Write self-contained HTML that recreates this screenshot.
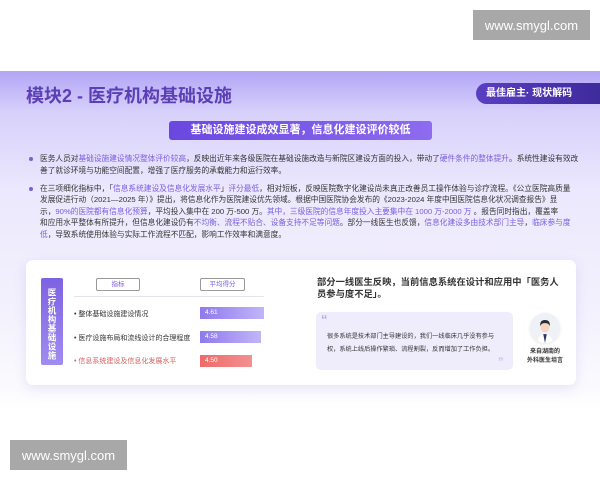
<!DOCTYPE html>
<html><head><meta charset="utf-8"><style>
*{margin:0;padding:0;box-sizing:border-box}
body{width:600px;height:480px;background:#fff;position:relative;overflow:hidden;font-family:"Liberation Sans","Noto Sans CJK SC",sans-serif}
.a{position:absolute}
.wm{background:#a8a8a8;color:#fff;font-size:13px;display:flex;align-items:center;justify-content:center}
.bg{left:0;top:71px;width:600px;height:340px;background:linear-gradient(180deg,#b2a5f6 0%,#d7d0fb 12%,#ece8fd 35%,#f3f1fd 70%,#fafafe 92%,#fff 100%)}
.t{font-size:7.7px;color:#333;white-space:nowrap}
.h{color:#7a5ee0}
</style></head><body>
<div class="a wm" style="left:473px;top:10px;width:117px;height:30px">www.smygl.com</div>
<div class="a wm" style="left:10px;top:440px;width:117px;height:30px">www.smygl.com</div>
<div class="a bg"></div>
<div class="a" style="left:26px;top:84px;font-size:18px;font-weight:bold;color:#5b3fb5;line-height:24px">模块2 - 医疗机构基础设施</div>
<div class="a" style="left:476px;top:83px;width:130px;height:21px;border-radius:11px 0 0 11px;background:linear-gradient(90deg,#5a3ec2,#3d2a9a);color:#fff;font-size:10px;font-weight:bold;line-height:21px;padding-left:10px">最佳雇主· 现状解码</div>
<div class="a" style="left:169px;top:121px;width:263px;height:19px;border-radius:3px;background:linear-gradient(90deg,#6a47e0,#8d6cf0);color:#fff;font-size:11px;font-weight:bold;line-height:19px;text-align:center">基础设施建设成效显著，信息化建设评价较低</div>
<div class="a" style="left:29px;top:157px;width:4px;height:4px;border-radius:50%;background:#7a5ee0"></div>
<div class="a t" style="left:40px;top:153px;line-height:12px">医务人员对<span class="h">基础设施建设情况整体评价较高</span>，反映出近年来各级医院在基础设施改造与新院区建设方面的投入，带动了<span class="h">硬件条件的整体提升</span>。系统性建设有效改<br>善了就诊环境与功能空间配置，增强了医疗服务的承载能力和运行效率。</div>
<div class="a" style="left:29px;top:187px;width:4px;height:4px;border-radius:50%;background:#7a5ee0"></div>
<div class="a t" style="left:40px;top:183px;line-height:11.4px">在三项细化指标中，「<span class="h">信息系统建设及信息化发展水平</span>」<span class="h">评分最低</span>，相对短板，反映医院数字化建设尚未真正改善员工操作体验与诊疗流程。《公立医院高质量<br>发展促进行动（2021—2025 年）》提出，将信息化作为医院建设优先领域。根据中国医院协会发布的《2023-2024 年度中国医院信息化状况调查报告》显<br>示，<span class="h">90%的医院都有信息化预算</span>，平均投入集中在 200 万-500 万。<span class="h">其中，三级医院的信息年度投入主要集中在 1000 万-2000 万</span> 。报告同时指出，覆盖率<br>和应用水平整体有所提升，但信息化建设仍有<span class="h">不均衡、流程不贴合、设备支持不足等问题</span>。部分一线医生也反馈，<span class="h">信息化建设多由技术部门主导</span>，<span class="h">临床参与度<br>低</span>，导致系统使用体验与实际工作流程不匹配，影响工作效率和满意度。</div>
<div class="a" style="left:26px;top:260px;width:550px;height:125px;background:#fff;border-radius:7px;box-shadow:0 4px 12px rgba(120,100,200,.15)"></div>
<div class="a" style="left:41px;top:278px;width:22px;height:87px;background:linear-gradient(180deg,#7d62e2,#a18cf0);border-radius:2px;color:#fff;font-size:8.5px;font-weight:bold;writing-mode:vertical-rl;text-align:center;line-height:22px;letter-spacing:0.5px;padding-top:5px">医疗机构基础设施</div>
<div class="a" style="left:96px;top:278px;width:44px;height:13px;border:1px solid #999;border-radius:2px;font-size:6.5px;color:#7a5ee0;text-align:center;line-height:11px">指标</div>
<div class="a" style="left:200px;top:278px;width:45px;height:13px;border:1px solid #999;border-radius:2px;font-size:6.5px;color:#7a5ee0;text-align:center;line-height:11px">平均得分</div>
<div class="a" style="left:74px;top:296px;width:190px;height:1px;background:#e4e4ec"></div>
<div class="a" style="left:74px;top:309px;font-size:7px;color:#333">• 整体基础设施建设情况</div>
<div class="a" style="left:74px;top:333px;font-size:7px;color:#333">• 医疗设施布局和流线设计的合理程度</div>
<div class="a" style="left:74px;top:356px;font-size:7px;color:#d46060">• 信息系统建设及信息化发展水平</div>
<div class="a" style="left:200px;top:307px;width:64px;height:12px;background:linear-gradient(90deg,#8f79ee,#c1b5f8);color:#fff;font-size:6.5px;line-height:12px;padding-left:5px">4.61</div>
<div class="a" style="left:200px;top:331px;width:61px;height:12px;background:linear-gradient(90deg,#8f79ee,#c1b5f8);color:#fff;font-size:6.5px;line-height:12px;padding-left:5px">4.58</div>
<div class="a" style="left:200px;top:355px;width:52px;height:12px;background:linear-gradient(90deg,#ee6a6a,#f39090);color:#fff;font-size:6.5px;line-height:12px;padding-left:5px">4.50</div>
<div class="a" style="left:317px;top:276px;font-size:9.3px;font-weight:bold;color:#333;line-height:12px;width:250px">部分一线医生反映，当前信息系统在设计和应用中「医务人员参与度不足」。</div>
<div class="a" style="left:316px;top:312px;width:197px;height:58px;background:#efecfc;border-radius:5px"></div>
<div class="a" style="left:321px;top:312px;font-size:13px;color:#b5a8ec;font-weight:bold">“</div>
<div class="a" style="left:327px;top:330px;font-size:6.2px;color:#333;line-height:13px;white-space:nowrap">很多系统是技术部门主导建设的，我们一线临床几乎没有参与<br>权，系统上线后操作繁琐、流程割裂，反而增加了工作负担。</div>
<div class="a" style="left:498px;top:356px;font-size:11px;color:#c5bbef;font-weight:bold">”</div>
<div class="a" style="left:530px;top:313px;width:30px;height:30px;border-radius:50%;background:#eef1f6;overflow:hidden;box-shadow:0 1px 3px rgba(0,0,0,.1)">
<svg width="30" height="30" viewBox="0 0 34 34"><path d="M8 34 Q9 25 17 24 Q25 25 26 34Z" fill="#fff"/><path d="M15 24 L17 34 L19 24Z" fill="#2a3560"/><ellipse cx="17" cy="16" rx="5" ry="6" fill="#f6d5c0"/><path d="M11.5 15 Q11 8 17 8 Q23 8 22.5 15 Q21 11 17 11.5 Q13 11 11.5 15Z" fill="#2b2b33"/></svg></div>
<div class="a" style="left:520px;top:348px;width:50px;font-size:6px;font-weight:bold;color:#333;text-align:center;line-height:8.5px">来自湖南的<br>外科医生坦言</div>
</body></html>
